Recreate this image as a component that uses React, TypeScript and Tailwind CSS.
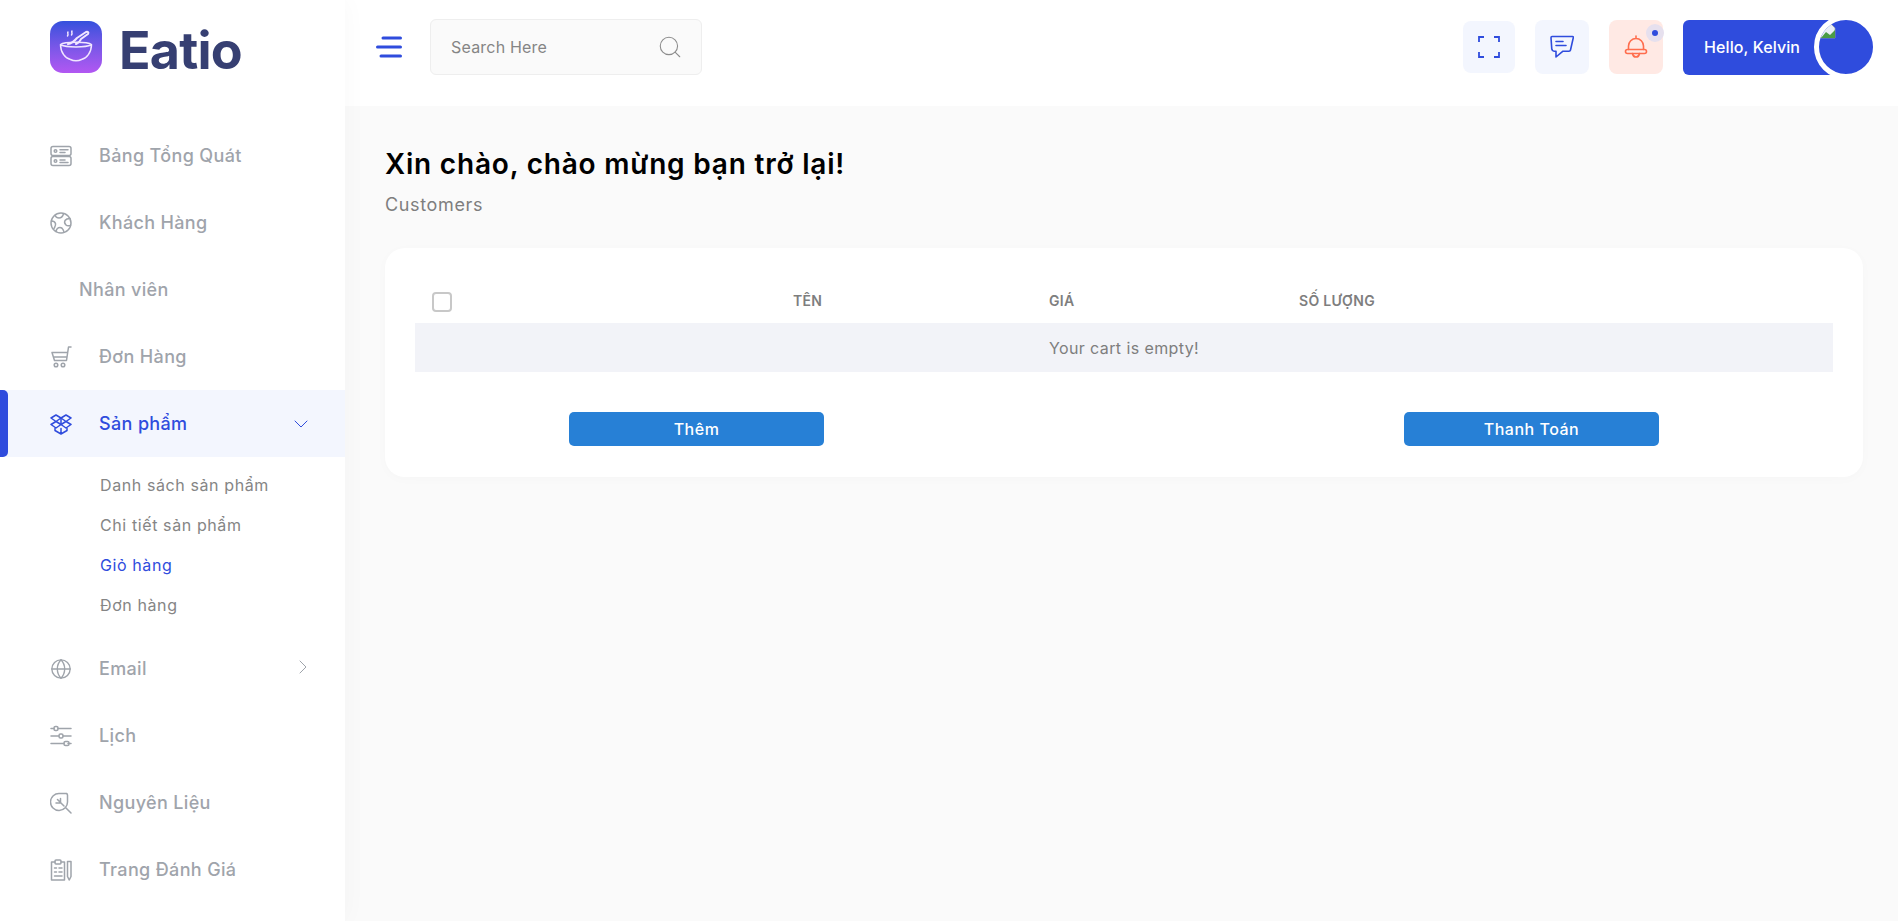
import { ChevronDown, ChevronRight, Globe, Search } from "lucide-react";
import type { ReactNode } from "react";

function IconBox({ children }: { children: ReactNode }) {
    return (
        <svg width="22" height="22" viewBox="0 0 22 22" fill="none" stroke="currentColor" strokeWidth="1.5" strokeLinecap="round" strokeLinejoin="round" className="shrink-0">
            {children}
        </svg>
    );
}

const dashboardIcon = (
    <IconBox>
        <rect x="1" y="1.500" width="20" height="9" rx="2" />
        <rect x="1" y="11.500" width="20" height="9" rx="2" />
        <circle cx="5.500" cy="6" r="1.300" />
        <circle cx="5.500" cy="16" r="1.300" />
        <path d="M10 4.800h8M10 7.500h5M10 15h5M10 17.500h8" />
    </IconBox>
);

const customerIcon = (
    <IconBox>
        <circle cx="11" cy="11" r="10" />
        <path d="M5 3.500c1 2 2.500 2.500 4 2.500 2 0 3.500-1 4.500-4M20 6.500c-2 0-4 .5-5 2-.8 1.500-.5 3 1 4.500 1 1 2.500 1 4.500.5" />
        <path d="M1.500 9c2 0 3.500 1 4 2.500.5 2-.5 3-1.500 5M6 19.500c.5-2.500 2-4 4-4 1.500 0 2.500 1 3 2l1 2.500" />
    </IconBox>
);

const cartIcon = (
    <IconBox>
        <path d="M21 1h-2.500l-2 13.500H4.500L2 6.500h15.500M3.500 11h13" />
        <circle cx="6" cy="19" r="1.800" />
        <circle cx="13" cy="19" r="1.800" />
    </IconBox>
);

const boxesIcon = (
    <IconBox>
        <path d="M6 2l5 3-5 3.500-5-3.500zM16 2l5 3-5 3.500-5-3.500zM6 8.500l5 3-5 3.500-5-3.500zM16 8.500l5 3-5 3.500-5-3.500z" />
        <path d="M11 5v6.500M5 15.500v2l6 3.500 6-3.500v-2M11 15.500V21" />
    </IconBox>
);

const slidersIcon = (
    <IconBox>
        <path d="M1 3.500h3M8 3.500h13M1 11h8M13 11h8M1 18.500h13M18 18.500h3" />
        <rect x="4" y="1.500" width="4" height="4" rx="1.500" />
        <rect x="9" y="9" width="4" height="4" rx="1.500" />
        <rect x="14" y="16.500" width="5" height="4" rx="1.500" />
    </IconBox>
);

const leafIcon = (
    <IconBox>
        <path d="M9.500 1.500h7a2 2 0 0 1 1 1.500v6.500a8.500 8.500 0 1 1-8-8z" />
        <path d="M16 16l5 5M14 14L7.500 7.500M10.500 11V6.500M10.500 11H6" />
    </IconBox>
);

const clipboardIcon = (
    <IconBox>
        <path d="M5 3H1.500v18h13V3H11" />
        <rect x="5" y="1" width="6" height="4" rx="1" />
        <path d="M4.500 9h2M9 9h3M4.500 13h2M9 13h3M4.500 17h7.500" />
        <path d="M17.500 2.500h3.500v15l-1.750 3.500-1.750-3.500z" />
    </IconBox>
);

const menuItems = [
    { label: "Bảng Tổng Quát", icon: dashboardIcon },
    { label: "Khách Hàng", icon: customerIcon },
    { label: "Nhân viên" },
    { label: "Đơn Hàng", icon: cartIcon },
];

const lowerItems = [
    { label: "Email", icon: <Globe size={22} strokeWidth={1.5} className="shrink-0" />, arrow: true },
    { label: "Lịch", icon: slidersIcon },
    { label: "Nguyên Liệu", icon: leafIcon },
    { label: "Trang Đánh Giá", icon: clipboardIcon },
];

function MenuRow({ label, icon, arrow }: { label: string; icon?: ReactNode; arrow?: boolean }) {
    return (
        <div className={`h-[67px] flex items-center text-[#9fa4ab] ${icon ? "pl-[50px]" : "pl-[79px]"}`}>
            {icon}
            <span className={`text-[18px] font-medium tracking-[0.35px] ${icon ? "ml-[27px]" : ""}`}>{label}</span>
            {arrow && <ChevronRight size={24} strokeWidth={1} className="ml-auto mr-[30px] -mt-[3px]" />}
        </div>
    );
}

export default function App() {
    return (
        <div className="flex h-[921px] overflow-hidden bg-[#fafafa] font-['Inter',sans-serif]">
            <aside className="w-[345px] shrink-0 bg-white shadow-[0_0_24px_rgba(0,0,0,0.03)] z-10">
                <div className="h-[106px] pl-[50px] pt-[21px] flex items-start">
                    <div className="w-[52px] h-[52px] rounded-[13px] bg-gradient-to-b from-[#3350dd] to-[#b257f2] flex items-center justify-center">
                        <svg width="36" height="36" viewBox="0 0 36 36" fill="none" stroke="#f1e6ff" strokeWidth="1.500" strokeLinecap="round" strokeLinejoin="round">
                            <path d="M2.500 15.500c4-3 27-3 31 0 0 8-5 14-10 15-3 1.500-8 1.500-11 0-5-1-10-7-10-15z" />
                            <path d="M3 16c5 2.500 25 2.500 30 0" />
                            <path d="M10 15c3-.5 6-2.500 9-6l9-6c2-.5 3 .5 2 2l-7 5c-1 3-3 4-5 5" strokeWidth="2" />
                            <path d="M10 3c-1 1.500 1 2-.5 4M14 2c-1 1.500 1 2-.5 4" />
                        </svg>
                    </div>
                    <span className="ml-[17px] mt-[4px] text-[52px] leading-[52px] font-bold tracking-[-0.8px] text-[#363f72]">Eatio</span>
                </div>
                <nav className="mt-[16px]">
                    {menuItems.map(item => (
                        <MenuRow key={item.label} {...item} />
                    ))}
                    <div className="h-[67px] flex items-center bg-[#f3f6fe] text-[#2f4cdd] pl-[50px] pr-[32px] relative">
                        <div className="absolute left-0 top-0 bottom-0 w-[8px] bg-[#2f4cdd] rounded-r-[5px]" />
                        {boxesIcon}
                        <span className="ml-[27px] text-[18px] font-medium tracking-[0.35px]">Sản phẩm</span>
                        <ChevronDown size={24} strokeWidth={1} className="ml-auto" />
                    </div>
                    <ul className="pl-[100px] pt-[8px] pb-[10px] text-[16px] tracking-[0.6px] text-[#858585]">
                        <li className="h-[40px] flex items-center">Danh sách sản phẩm</li>
                        <li className="h-[40px] flex items-center">Chi tiết sản phẩm</li>
                        <li className="h-[40px] flex items-center text-[#2f4cdd]">Giỏ hàng</li>
                        <li className="h-[40px] flex items-center">Đơn hàng</li>
                    </ul>
                    {lowerItems.map(item => (
                        <MenuRow key={item.label} {...item} />
                    ))}
                </nav>
            </aside>

            <div className="flex-1 min-w-0 flex flex-col">
                <header className="h-[106px] bg-white flex items-center pl-[31px] pr-[52px] pb-[12px]">
                    <svg width="26" height="22" viewBox="0 0 26 22" fill="none" stroke="#2f4cdd" strokeWidth="3" strokeLinecap="round" className="shrink-0">
                        <path d="M7 2h17.500M1.500 11h23M5 20h19.500" />
                    </svg>
                    <div className="ml-[28px] w-[272px] h-[56px] bg-[#fafafa] border border-[#eeeeee] rounded-[6px] flex items-center pl-[20px] pr-[18px] text-[16px] tracking-[0.2px] text-[#858585]">
                        <span>Search Here</span>
                        <Search size={26} strokeWidth={1} className="ml-auto text-[#8c8c8c]" />
                    </div>
                    <div className="ml-auto flex items-center gap-[20px]">
                        <div className="w-[52px] h-[52px] rounded-[8px] bg-[#f3f6fe] flex items-center justify-center">
                            <svg width="22" height="22" viewBox="0 0 22 22" fill="none" stroke="#2f4cdd" strokeWidth="1.800">
                                <path d="M1 6V1h5M16 1h5v5M21 16v5h-5M6 21H1v-5" />
                            </svg>
                        </div>
                        <div className="w-[54px] h-[54px] rounded-[8px] bg-[#f3f6fe] flex items-center justify-center">
                            <svg width="24" height="24" viewBox="0 0 24 24" fill="none" stroke="#2f4cdd" strokeWidth="1.600" strokeLinecap="round" strokeLinejoin="round">
                                <path d="M2 1.500h20.500c.8 0 1 .6.8 1.300L20.500 15c-.2.800-.8 1.200-1.500 1.200h-6L6 22v-5.800H4c-1.200 0-2-.8-2.200-2L1 2.800c0-.8.300-1.300 1-1.300z" />
                                <path d="M6 6.500h7M6 10.500h10" />
                            </svg>
                        </div>
                        <div className="w-[54px] h-[54px] rounded-[8px] bg-[#ffe9e4] flex items-center justify-center relative">
                            <svg width="24" height="24" viewBox="0 0 24 24" fill="none" stroke="#ff6d4d" strokeWidth="1.600" strokeLinecap="round" strokeLinejoin="round">
                                <path d="M12 1v2.500M4.500 14.500V11a7.500 7.500 0 0 1 15 0v3.500" />
                                <rect x="1.500" y="14.500" width="21" height="4" rx="2" />
                                <path d="M8.500 18.500c.5 3 2 3.500 3.500 3.500s3-.5 3.500-3.500" />
                            </svg>
                            <div className="absolute top-[4px] -right-[1px] w-[18px] h-[18px] rounded-full bg-[#e6e0ee] flex items-center justify-center">
                                <div className="w-[6px] h-[6px] rounded-full bg-[#2f4cdd]" />
                            </div>
                        </div>
                        <div className="w-[163px] h-[55px] rounded-l-[6px] bg-[#2f4cdd] flex items-center pl-[21px] text-white text-[16px] font-medium tracking-[0.1px] relative">
                            Hello, Kelvin
                            <div className="absolute -right-[32px] -top-[5px] w-[64px] h-[64px] rounded-full bg-[#2f4cdd] border-[5px] border-white overflow-hidden">
                                <svg width="16" height="16" viewBox="0 0 16 16" className="absolute left-[1px] top-[3px]">
                                    <path d="M1 1h10l4 4v10H1z" fill="#e9eef5" stroke="#9aa0a6" strokeWidth="0.700" />
                                    <path d="M1 15l5-6 4 3 5-5v8z" fill="#4a9b46" />
                                </svg>
                            </div>
                        </div>
                    </div>
                </header>

                <main className="flex-1 pl-[40px] pr-[35px] pt-[39px]">
                    <h1 className="text-[28px] leading-[38px] font-semibold tracking-[0.8px] text-black">Xin chào, chào mừng bạn trở lại!</h1>
                    <p className="mt-[8px] text-[18px] leading-[27px] tracking-[0.65px] text-[#7e7e7e]">Customers</p>
                    <section className="mt-[30px] h-[229px] bg-white rounded-[20px] px-[30px] pt-[32px] shadow-[0_2px_12px_rgba(0,0,0,0.02)]">
                        <div className="grid grid-cols-[378px_256px_250px_1fr] h-[43px] text-[14px] font-semibold tracking-[0.3px] text-[#7e7e7e]">
                            <div className="pl-[17px] pt-[12px]">
                                <div className="w-[20px] h-[20px] rounded-[4px] border-2 border-[#c8c8c8]" />
                            </div>
                            <div className="pt-[10px]">TÊN</div>
                            <div className="pt-[10px]">GIÁ</div>
                            <div className="pt-[10px]">SỐ LƯỢNG</div>
                        </div>
                        <div className="h-[49px] bg-[#f2f3f8] flex items-center justify-center text-[16px] tracking-[0.4px] text-[#7e7e7e]">
                            Your cart is empty!
                        </div>
                        <div className="mt-[40px] pl-[154px] pr-[174px] flex justify-between">
                            <button className="w-[255px] h-[34px] rounded-[5px] bg-[#2780d6] text-white text-[16px] font-medium tracking-[0.5px]">Thêm</button>
                            <button className="w-[255px] h-[34px] rounded-[5px] bg-[#2780d6] text-white text-[16px] font-medium tracking-[0.5px]">Thanh Toán</button>
                        </div>
                    </section>
                </main>
            </div>
        </div>
    );
}
